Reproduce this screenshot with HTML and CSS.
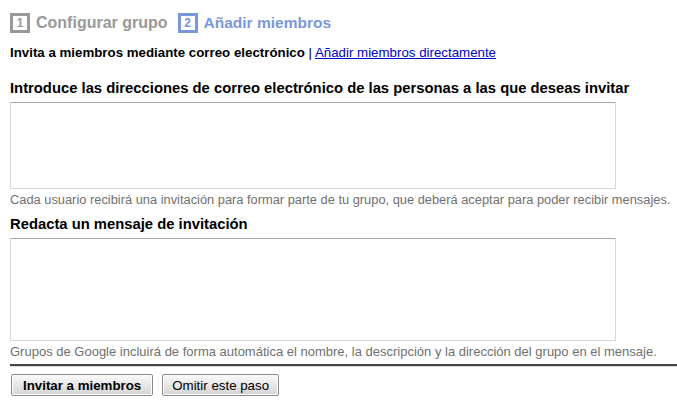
FILE: index.html
```html
<!DOCTYPE html>
<html lang="es">
<head>
<meta charset="utf-8">
<title>Añadir miembros</title>
<link rel="stylesheet" href="styles.css">
</head>
<body>
<div class="page">
  <div class="steps">
    <div class="step done"><span class="num">1</span><span class="label">Configurar grupo</span></div>
    <div class="step current"><span class="num">2</span><span class="label">Añadir miembros</span></div>
  </div>
  <div class="modes"><b>Invita a miembros mediante correo electrónico</b> | <a href="#" class="link">Añadir miembros directamente</a></div>
  <div class="field first">
    <div class="field-title">Introduce las direcciones de correo electrónico de las personas a las que deseas invitar</div>
    <textarea class="box box-emails"></textarea>
    <div class="hint">Cada usuario recibirá una invitación para formar parte de tu grupo, que deberá aceptar para poder recibir mensajes.</div>
  </div>
  <div class="field">
    <div class="field-title">Redacta un mensaje de invitación</div>
    <textarea class="box box-msg"></textarea>
    <div class="hint hint-wide">Grupos de Google incluirá de forma automática el nombre, la descripción y la dirección del grupo en el mensaje.</div>
  </div>
  <div class="actions">
    <button class="btn primary">Invitar a miembros</button>
    <button class="btn secondary">Omitir este paso</button>
  </div>
</div>
</body>
</html>
```
FILE: styles.css
```css
html, body {
  margin: 0;
  padding: 0;
  background: #fff;
}
body {
  font-family: "Liberation Sans", Arial, sans-serif;
  color: #000;
}
.page {
  padding: 13px 0 0 10px;
}
.steps {
  display: flex;
  gap: 10px;
  align-items: center;
}
.step {
  display: flex;
  align-items: center;
  gap: 6px;
  font-size: 16px;
  font-weight: bold;
}
.step.current .label { font-size: 15.5px; }
.step .num {
  box-sizing: border-box;
  width: 20px;
  height: 20px;
  border: 3px solid currentColor;
  font-size: 12px;
  display: flex;
  align-items: center;
  justify-content: center;
}
.step.done { color: #999; }
.step.current { color: #7a97dd; }
.modes {
  margin-top: 12px;
  font-size: 13.3px;
  line-height: 16px;
}
.link { color: #00c; }
.field.first { margin-top: 19px; }
.field { margin-top: 9px; }
.field-title {
  font-size: 14.8px;
  font-weight: bold;
  line-height: 17px;
}
.box {
  display: block;
  box-sizing: border-box;
  margin: 5px 0 0 0;
  width: 606px;
  border: 1px solid #d9d9d9;
  border-top-color: #a8a8a8;
  resize: none;
  padding: 2px;
  font: 13px "Liberation Sans", Arial, sans-serif;
}
.box-emails { height: 87px; }
.box-msg { height: 103px; }
.hint {
  margin-top: 3px;
  font-size: 12.85px;
  line-height: 15px;
  color: #707070;
}
.hint-wide { font-size: 13px; }
.actions {
  margin-top: 5px;
  border-top: 2px solid #444;
  box-shadow: inset 0 1px 0 #ddd;
  padding-top: 8px;
  display: flex;
  gap: 9px;
}
.btn {
  font: 13.3px "Liberation Sans", Arial, sans-serif;
  color: #000;
  height: 22px;
  padding: 0 11px;
  border: 1px solid #8a8a8a;
  border-radius: 2px;
  background: linear-gradient(#fafafa, #e3e3e3 60%, #d4d4d4);
  box-shadow: inset 0 0 0 1px #fff;
}
.btn.primary { font-weight: bold; margin-left: 1px; }
.btn.secondary { padding: 0 9px; }
```
